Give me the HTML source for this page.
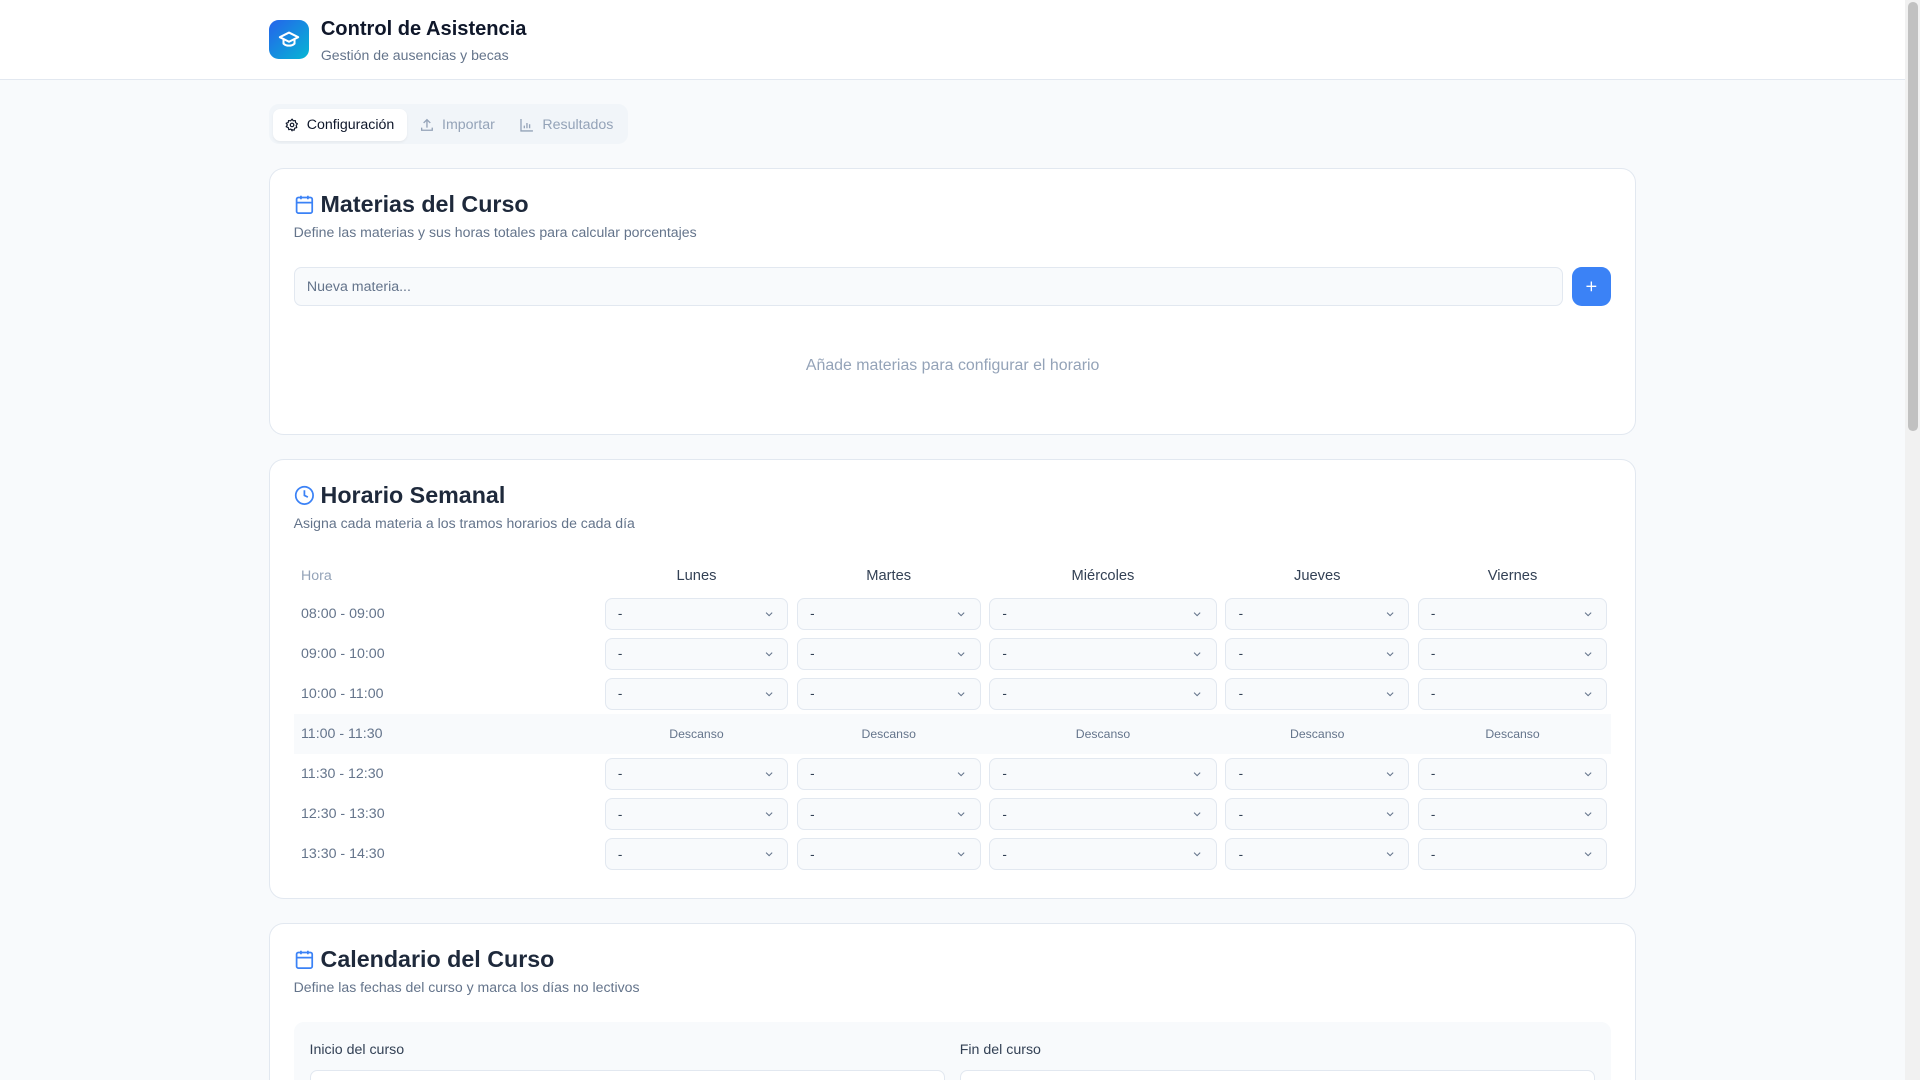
<!DOCTYPE html>
<html><head><meta charset="utf-8"><style>
*{box-sizing:border-box;margin:0;padding:0}
html,body{width:1920px;height:1080px;overflow:hidden}
body{background:#f8fafc;font-family:"Liberation Sans",sans-serif;color:#1e293b}
#z{zoom:1.22449;width:1568px;height:882px;position:relative;overflow:hidden}
.hdr{position:absolute;left:0;top:0;width:1556px;height:65px;background:#fff;border-bottom:1px solid #e2e8f0}
.logo{position:absolute;left:220px;top:16px;width:32px;height:32px;border-radius:8px;background:linear-gradient(135deg,#2563eb,#06b6d4);display:flex;align-items:center;justify-content:center}
.t1{position:absolute;left:262px;top:15px;font-size:16.4px;font-weight:bold;color:#0f172a}
.t2{position:absolute;left:262px;top:38px;font-size:11.5px;color:#64748b}
.sb{position:absolute;left:1556px;top:0;width:12px;height:882px;background:#f1f1f1}
.sb div{position:absolute;left:2px;top:2px;width:8px;height:350px;background:#c1c1c1;border-radius:4px}
.tabs{position:absolute;left:220px;top:85px;width:293px;height:33px;background:#f1f5f9;border-radius:8px}
.tab{position:absolute;top:4px;height:26px;display:flex;align-items:center;gap:6px;font-size:11.6px;color:#94a3b8;padding:0 10px}
.tab.a{background:#fff;color:#0f172a;border-radius:6px;box-shadow:0 1px 2px rgba(0,0,0,.05)}
.card{position:absolute;left:220px;width:1116px;background:#fff;border:1px solid #e2e8f0;border-radius:12px}
.ct{position:absolute;left:19px;top:18px;display:flex;align-items:center;gap:5px;font-size:19px;font-weight:bold;color:#1e293b}
.cs{position:absolute;left:19px;font-size:11.5px;color:#64748b}
.inp{position:absolute;left:19px;top:80px;width:1037px;height:32px;background:#f8fafc;border:1px solid #e2e8f0;border-radius:6px;font-size:11.6px;color:#64748b;padding:9px 10px}
.btn{position:absolute;left:1063px;top:80px;width:32px;height:32px;background:#3b82f6;border-radius:8px;display:flex;align-items:center;justify-content:center}
.grid{position:absolute;left:19px;display:grid;grid-template-columns:247px 150px 150px 186px 150px 155px;column-gap:7px;width:1076px}
.row{height:33px;align-items:center}
.h{font-size:12px;color:#334155;text-align:center}
.hr{font-size:11.6px;color:#64748b;padding-left:6px}
.sel{height:26px;background:#f8fafc;border:1px solid #e2e8f0;border-radius:6px;font-size:11px;color:#334155;display:flex;align-items:center;justify-content:space-between;padding:0 10px 0 10px}
.ds{font-size:10px;color:#64748b;text-align:center}
</style></head><body><div id="z">
<div class="hdr">
<div class="logo"><svg width="18" height="18" viewBox="0 0 24 24" fill="none" stroke="#fff" stroke-width="2.2" stroke-linecap="round" stroke-linejoin="round"><path d="M22 10 12 5 2 10l10 5 10-5z"/><path d="M6 12v5c3 3 9 3 12 0v-5"/></svg></div>
<div class="t1">Control de Asistencia</div><div class="t2">Gestión de ausencias y becas</div>
</div>
<div class="sb"><div></div></div>
<div class="tabs">
<div class="tab a" style="left:3px;width:109px"><svg width="13" height="13" viewBox="0 0 24 24" fill="none" stroke="#0f172a" stroke-width="2" stroke-linejoin="round"><circle cx="12" cy="12" r="3"/><path d="M12 2l2 3 3.5-.5.5 3.5 3 2-2 3 1 3.5-3.5 1-1 3.5-3.5-1L12 22l-2-3-3.5 1-1-3.5L2 15l2-3-2-3 3.5-1 .5-3.5L9.5 5z"/></svg>Configuración</div>
<div class="tab" style="left:112px"><svg width="13" height="13" viewBox="0 0 24 24" fill="none" stroke="#94a3b8" stroke-width="2"><path d="M4 16v4h16v-4M12 4v12M7 9l5-5 5 5"/></svg>Importar</div>
<div class="tab" style="left:194px"><svg width="13" height="13" viewBox="0 0 24 24" fill="none" stroke="#94a3b8" stroke-width="2"><path d="M3 3v18h18M8 17v-4M12 17V9M16 17v-6"/></svg>Resultados</div>
</div>

<div class="card" style="top:137px;height:218px">
<div class="ct"><svg width="17" height="17" viewBox="0 0 24 24" fill="none" stroke="#3b82f6" stroke-width="2"><rect x="3" y="4" width="18" height="18" rx="2"/><path d="M16 2v4M8 2v4M3 10h18"/></svg>Materias del Curso</div>
<div class="cs" style="top:45px">Define las materias y sus horas totales para calcular porcentajes</div>
<div class="inp">Nueva materia...</div>
<div class="btn"><svg width="12" height="12" viewBox="0 0 24 24" stroke="#fff" stroke-width="2.2"><path d="M12 4v16M4 12h16"/></svg></div>
<div style="position:absolute;left:0;width:100%;top:154px;text-align:center;font-size:13px;color:#94a3b8">Añade materias para configurar el horario</div>
</div>

<div class="card" style="top:375px;height:359px">
<div class="ct"><svg width="17" height="17" viewBox="0 0 24 24" fill="none" stroke="#3b82f6" stroke-width="2"><circle cx="12" cy="12" r="10"/><path d="M12 6v6l4 2"/></svg>Horario Semanal</div>
<div class="cs" style="top:45px">Asigna cada materia a los tramos horarios de cada día</div>
<div class="grid row" style="top:78px"><div class="hr" style="color:#94a3b8">Hora</div><div class="h">Lunes</div><div class="h">Martes</div><div class="h">Miércoles</div><div class="h">Jueves</div><div class="h">Viernes</div></div>
<div id="rows"></div>
</div>

<div class="card" style="top:754px;height:140px">
<div class="ct"><svg width="17" height="17" viewBox="0 0 24 24" fill="none" stroke="#3b82f6" stroke-width="2"><rect x="3" y="4" width="18" height="18" rx="2"/><path d="M16 2v4M8 2v4M3 10h18M8 14h.01M12 14h.01M16 14h.01M8 18h.01M12 18h.01M16 18h.01"/></svg>Calendario del Curso</div>
<div class="cs" style="top:45px">Define las fechas del curso y marca los días no lectivos</div>
<div style="position:absolute;left:19px;top:80px;width:1076px;height:50px;background:#f8fafc;border-radius:8px 8px 0 0">
<div style="position:absolute;left:13px;top:16px;font-size:11.6px;color:#334155">Inicio del curso</div>
<div style="position:absolute;left:544px;top:16px;font-size:11.6px;color:#334155">Fin del curso</div>
<div style="position:absolute;left:13px;top:39px;width:519px;height:11px;background:#fff;border:1px solid #e2e8f0;border-bottom:none;border-radius:6px 6px 0 0"></div>
<div style="position:absolute;left:544px;top:39px;width:519px;height:11px;background:#fff;border:1px solid #e2e8f0;border-bottom:none;border-radius:6px 6px 0 0"></div>
</div>
</div>
<script>
var times=["08:00 - 09:00","09:00 - 10:00","10:00 - 11:00","11:00 - 11:30","11:30 - 12:30","12:30 - 13:30","13:30 - 14:30"];
var h="";var chev='<svg width="10" height="10" viewBox="0 0 24 24" fill="none" stroke="#64748b" stroke-width="2"><path d="M6 9l6 6 6-6"/></svg>';
times.forEach(function(t,i){var top=109+i*32.7;
if(i==3){h+='<div class="grid row" style="top:'+top+'px;background:#f8fafc"><div class="hr">'+t+'</div>';for(var j=0;j<5;j++)h+='<div class="ds">Descanso</div>';}
else{h+='<div class="grid row" style="top:'+top+'px"><div class="hr">'+t+'</div>';for(var j=0;j<5;j++)h+='<div class="sel"><span>-</span>'+chev+'</div>';}
h+='</div>';});
document.getElementById("rows").outerHTML=h;
</script>
</div></body></html>
